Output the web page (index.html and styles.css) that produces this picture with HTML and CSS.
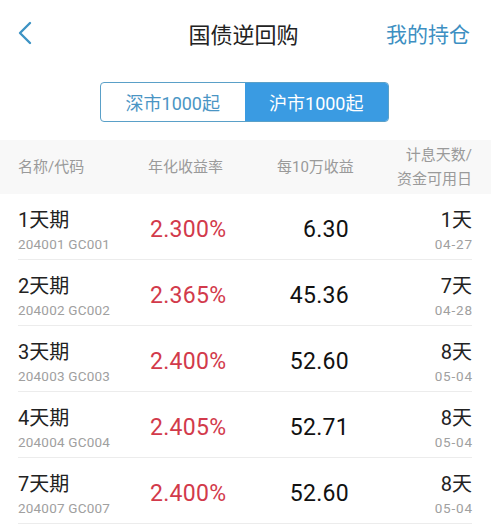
FILE: index.html
```html
<!DOCTYPE html>
<html lang="zh-CN">
<head>
  <meta charset="UTF-8">
  <title>国债逆回购</title>
  <link rel="stylesheet" href="styles.css">
</head>
<body>
  <div class="topbar">
    <a class="back" href="javascript:;">
      <svg width="16" height="24" viewBox="0 0 16 24"><polyline points="13,2 3,12 13,22" fill="none" stroke="#3d93c4" stroke-width="2.4" stroke-linecap="round" stroke-linejoin="round"/></svg>
    </a>
    <div class="title">国债逆回购</div>
    <a class="holdings" href="javascript:;">我的持仓</a>
  </div>

  <div class="tabs">
    <a class="tab" href="javascript:;">深市1000起</a>
    <a class="tab active" href="javascript:;">沪市1000起</a>
  </div>

  <div class="head">
    <div class="cell">名称/代码</div>
    <div class="cell">年化收益率</div>
    <div class="cell income-h">每10万收益</div>
    <div class="cell days-h">计息天数/<br>资金可用日</div>
  </div>

  <ul class="list">
    <li class="row">
      <div class="name">1天期<span>204001 GC001</span></div>
      <div class="rate">2.300%</div>
      <div class="income">6.30</div>
      <div class="days">1天<span>04-27</span></div>
    </li>
    <li class="row">
      <div class="name">2天期<span>204002 GC002</span></div>
      <div class="rate">2.365%</div>
      <div class="income">45.36</div>
      <div class="days">7天<span>04-28</span></div>
    </li>
    <li class="row">
      <div class="name">3天期<span>204003 GC003</span></div>
      <div class="rate">2.400%</div>
      <div class="income">52.60</div>
      <div class="days">8天<span>05-04</span></div>
    </li>
    <li class="row">
      <div class="name">4天期<span>204004 GC004</span></div>
      <div class="rate">2.405%</div>
      <div class="income">52.71</div>
      <div class="days">8天<span>05-04</span></div>
    </li>
    <li class="row">
      <div class="name">7天期<span>204007 GC007</span></div>
      <div class="rate">2.400%</div>
      <div class="income">52.60</div>
      <div class="days">8天<span>05-04</span></div>
    </li>
  </ul>
</body>
</html>
```

FILE: styles.css
```css
*{
  margin: 0;
  padding: 0;
  box-sizing: border-box;
}
body{
  width: 491px;
  background-color: #fff;
  font-family: Roboto, "Noto Sans CJK SC", sans-serif;
  color: #222;
  overflow: hidden;
}
a{
  text-decoration: none;
}
/* 顶部标题栏 */
.topbar{
  height: 66px;
  display: grid;
  grid-template-columns: 100px 1fr 100px;
  align-items: center;
  padding: 0 21px 0 17px;
}
.back{
  display: flex;
  align-items: center;
}
.title{
  text-align: center;
  font-size: 22px;
  color: #222;
}
.holdings{
  text-align: right;
  font-size: 21px;
  color: #3d8fc2;
}
/* 深市/沪市切换 */
.tabs{
  display: flex;
  width: 289px;
  height: 40px;
  margin: 16px 0 0 100px;
  border: 1px solid #5aa0c8;
  border-radius: 4px;
  overflow: hidden;
}
.tab{
  flex: 1;
  display: flex;
  align-items: center;
  justify-content: center;
  font-size: 18px;
  color: #4a95c4;
}
.tab.active{
  background-color: #3a9be2;
  color: #fff;
}
/* 表头 */
.head{
  display: grid;
  grid-template-columns: 130px 95px 106px 1fr;
  align-items: center;
  height: 54px;
  margin-top: 18px;
  padding: 0 19px 0 18px;
  background-color: #f8f8f8;
  font-size: 15px;
  color: #9a9a9a;
  line-height: 24px;
}
.income-h{
  padding-left: 34px;
  white-space: nowrap;
}
.days-h{
  text-align: right;
}
/* 列表 */
.list{
  list-style-type: none;
  padding: 0 19px 0 18px;
}
.row{
  display: grid;
  grid-template-columns: 130px 95px 106px 1fr;
  align-items: center;
  height: 66px;
  border-bottom: 1px solid #ececec;
}
.name, .days{
  font-size: 20px;
  line-height: 26px;
  padding-top: 8px;
}
.name span, .days span{
  display: block;
  font-size: 13.5px;
  line-height: 22px;
  letter-spacing: 0.2px;
  color: #a0a0a0;
}
.days span{
  letter-spacing: 0.8px;
  margin-right: -0.8px;
}
.rate{
  font-size: 23px;
  color: #d23a4b;
  padding: 5px 0 0 2px;
  letter-spacing: 0.3px;
}
.income{
  font-size: 23px;
  text-align: right;
  padding-top: 5px;
  letter-spacing: 0.3px;
  color: #111;
}
.days{
  text-align: right;
}
```
